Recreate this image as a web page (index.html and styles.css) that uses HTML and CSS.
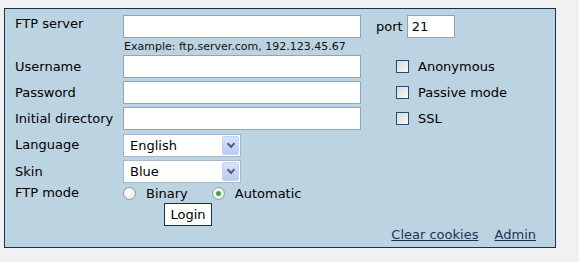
FILE: index.html
```html
<!DOCTYPE html>
<html lang="en">
<head>
  <meta charset="UTF-8">
  <title>FTP login</title>
  <link rel="stylesheet" href="styles.css">
</head>
<body>
  <form class="panel" onsubmit="return false">
    <div class="grid">
      <label class="lbl lbl-top">FTP server</label>
      <input class="txt" type="text">
      <div class="side port">port <input class="txt port-in" type="text" value="21"></div>

      <div></div>
      <div class="example">Example: ftp.server.com, 192.123.45.67</div>
      <div></div>

      <label class="lbl">Username</label>
      <input class="txt" type="text">
      <label class="side check"><input type="checkbox" class="cb"> Anonymous</label>

      <label class="lbl">Password</label>
      <input class="txt" type="password">
      <label class="side check"><input type="checkbox" class="cb"> Passive mode</label>

      <label class="lbl">Initial directory</label>
      <input class="txt" type="text">
      <label class="side check"><input type="checkbox" class="cb"> SSL</label>

      <label class="lbl">Language</label>
      <div class="sel"><span>English</span><i class="arrow"></i></div>
      <div></div>

      <label class="lbl">Skin</label>
      <div class="sel"><span>Blue</span><i class="arrow"></i></div>
      <div></div>

      <label class="lbl">FTP mode</label>
      <div class="radios">
        <label class="rad"><input type="radio" name="mode" class="rb"> Binary</label>
        <label class="rad"><input type="radio" name="mode" class="rb" checked> Automatic</label>
      </div>
      <div></div>

      <div class="submit"><button class="btn">Login</button></div>
      <div></div>
    </div>
    <div class="links">
      <a href="#">Clear cookies</a>
      <a href="#">Admin</a>
    </div>
  </form>
</body>
</html>
```

FILE: styles.css
```css
body {
  margin: 0;
  padding: 8px 4px;
  background: #f1f1f3;
  font-family: 'DejaVu Sans', Verdana, sans-serif;
  font-size: 13px;
  color: #000;
}

.panel {
  box-sizing: border-box;
  width: 552px;
  height: 240px;
  margin: 0;
  background: #bcd3e2;
  border: 1px solid #1b2f4c;
  padding: 6px 0 0 10px;
}

.grid {
  display: grid;
  grid-template-columns: 108px 238px 1fr;
  grid-template-rows: 23px 11px 23px 23px 23px 24px 23px 14px 23px;
  row-gap: 3px;
  align-items: center;
}

.lbl { line-height: 16px; }

.lbl-top {
  align-self: start;
  padding-top: 1px;
}

.txt {
  box-sizing: border-box;
  width: 238px;
  height: 23px;
  margin: 0;
  padding: 2px 4px;
  border: 1px solid #8ea6ba;
  background: #fff;
  font: 13px 'DejaVu Sans', Verdana, sans-serif;
}

.side { padding-left: 15px; }

.port {
  display: flex;
  align-items: center;
  gap: 4px;
}

.port-in { width: 48px; }

.example {
  font-size: 11px;
  line-height: 13px;
  color: #111;
  padding-left: 1px;
  align-self: start;
  margin-top: -1px;
}

.check {
  display: flex;
  align-items: center;
  gap: 9px;
  padding-left: 35px;
}

.cb {
  appearance: none;
  width: 13px;
  height: 13px;
  margin: 0;
  border: 1px solid #1e4d7a;
  background: linear-gradient(135deg, #ded9d0, #fbfaf6);
}

.sel {
  box-sizing: border-box;
  width: 118px;
  height: 23px;
  display: flex;
  align-items: center;
  justify-content: space-between;
  background: #fff;
  border: 1px solid #a4b9cb;
  padding: 0 1px 0 6px;
  align-self: end;
}

.arrow {
  width: 17px;
  height: 19px;
  box-sizing: border-box;
  border: 1px solid #c3d3f5;
  border-radius: 2px;
  background: linear-gradient(#d9e3fb, #b8c9f3);
  position: relative;
}

.arrow::after {
  content: "";
  position: absolute;
  left: 5px;
  top: 4px;
  width: 4px;
  height: 4px;
  border-right: 2px solid #4d6185;
  border-bottom: 2px solid #4d6185;
  transform: rotate(45deg);
}

.radios {
  display: flex;
  gap: 24px;
}

.rad {
  display: flex;
  align-items: center;
  gap: 10px;
}

.rb {
  appearance: none;
  width: 13px;
  height: 13px;
  margin: 0;
  border: 1px solid #8b9aab;
  border-radius: 50%;
  background: radial-gradient(circle at 40% 40%, #ffffff, #e4e2dc);
  position: relative;
}

.rb:checked::after {
  content: "";
  position: absolute;
  left: 3px;
  top: 3px;
  width: 5px;
  height: 5px;
  border-radius: 50%;
  background: #3da842;
}

.submit {
  grid-column: 1 / 3;
  text-align: center;
}

.btn {
  height: 23px;
  padding: 0 5px;
  background: #fff;
  border: 1px solid #1b2f4c;
  font: 13px 'DejaVu Sans', Verdana, sans-serif;
  color: #000;
}

.links {
  text-align: right;
  padding-right: 19px;
  margin-top: 1px;
}

.links a {
  color: #1b3352;
  margin-left: 12px;
}
```
